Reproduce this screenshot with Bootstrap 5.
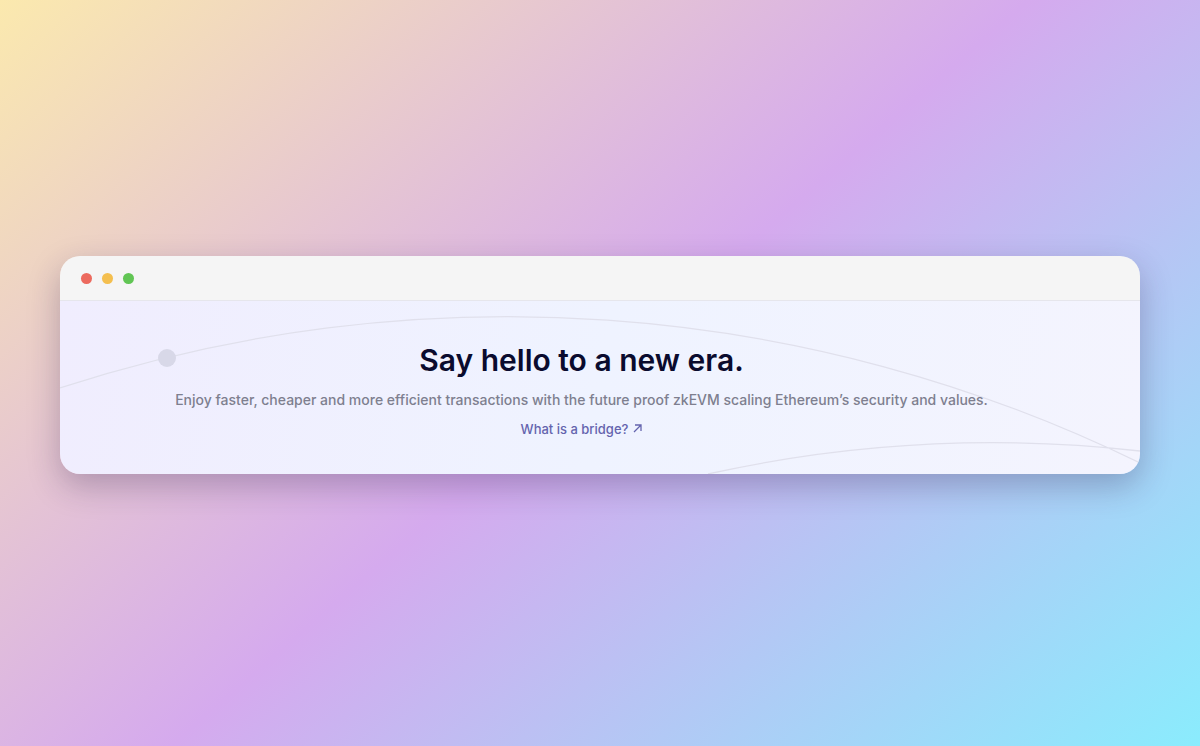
<!DOCTYPE html>
<html lang="en">
<head>
<meta charset="utf-8">
<meta name="viewport" content="width=device-width, initial-scale=1">
<title>Say hello to a new era</title>
<link rel="stylesheet" href="https://cdn.jsdelivr.net/npm/bootstrap@5.3.0/dist/css/bootstrap.min.css">
<script src="https://cdn.jsdelivr.net/npm/bootstrap@5.3.0/dist/js/bootstrap.bundle.min.js"></script>
<style>
body{font-family:Inter,sans-serif;background:linear-gradient(139deg,#fbe9ae 0%,#d5aaee 50%,#8aecfd 100%) fixed;padding:0 60px 16px}
.window{border-radius:20px;box-shadow:0 12px 32px rgba(40,30,70,.28)}
.titlebar{height:45px;background:#f5f5f5;border-bottom:1px solid #e6e6ec;padding:0 21px;gap:10px}
.dot{width:11px;height:11px}
.red{background:#ec6a5e}.amber{background:#f4bf4f}.green{background:#61c554}
.hero{background:linear-gradient(100deg,#f0edfe 0%,#eff3ff 50%,#f4f4fe 100%);padding:39px 37px 35px 0}
.hero h1{font-size:30px;line-height:40px;font-weight:600;color:#0a0b2e;margin-bottom:10px}
.hero p{font-size:14px;line-height:20px;font-weight:500;color:#7e7f8f;margin-bottom:9px}
.hero a{font-size:13px;line-height:20px;font-weight:500;color:#6464ae;gap:5px}
</style>
</head>
<body class="min-vh-100 d-flex align-items-center">
<main class="window w-100 overflow-hidden">
<div class="titlebar d-flex align-items-center"><span class="dot red rounded-circle"></span><span class="dot amber rounded-circle"></span><span class="dot green rounded-circle"></span></div>
<section class="hero position-relative text-center">
<svg class="position-absolute top-0 start-0 w-100 h-100" viewBox="0 0 1080 173" preserveAspectRatio="none" fill="none" stroke="#e0e0ec" stroke-width="1.3" aria-hidden="true"><path d="M0 87A1440 1440 0 0 1 1080 162M648 173A1320 1320 0 0 1 1080 150"/><circle cx="107" cy="57" r="9" fill="#d8d8e8" stroke="none"/></svg>
<div class="position-relative d-flex flex-column align-items-center">
<h1>Say hello to a new era.</h1>
<p>Enjoy faster, cheaper and more efficient transactions with the future proof zkEVM scaling Ethereum’s security and values.</p>
<a href="#" class="d-flex align-items-center text-decoration-none">What is a bridge?<svg width="9" height="12" viewBox="0 0 9 12" fill="none" stroke="currentColor" stroke-width="1.3" aria-hidden="true"><path d="M1 9L8 2M2 2H8V8"/></svg></a>
</div>
</section>
</main>
</body>
</html>
